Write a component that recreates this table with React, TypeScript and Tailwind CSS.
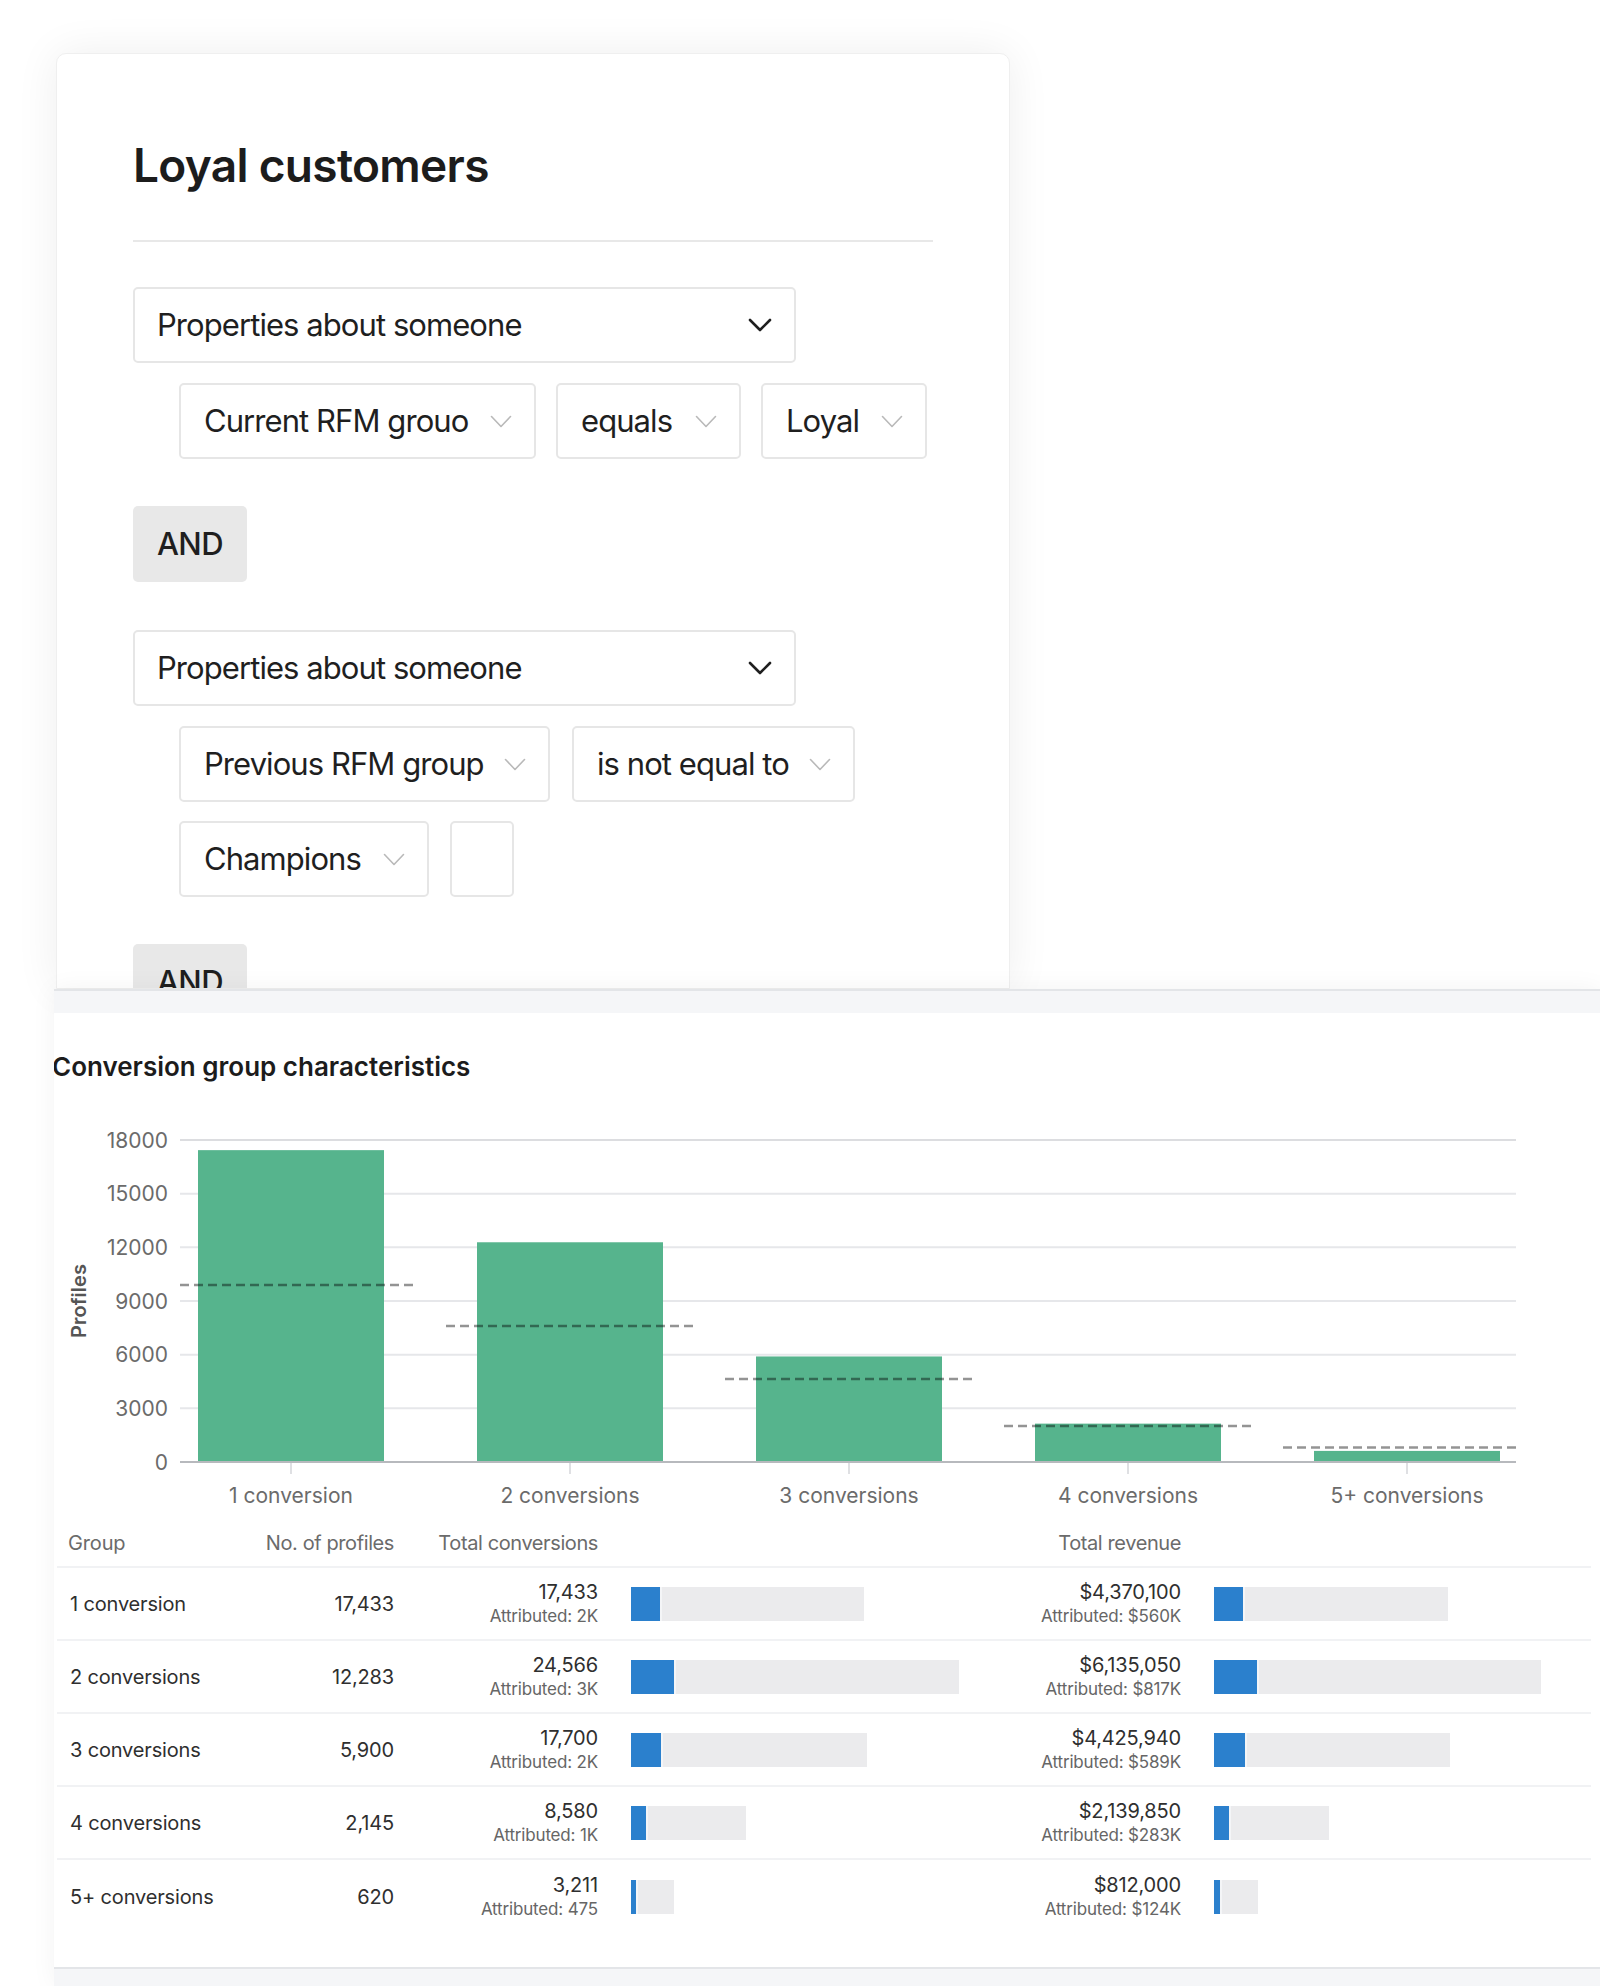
import React from "react";

const DarkChevron = () => (
  <svg width="24" height="14" viewBox="0 0 24 14" className="shrink-0">
    <path d="M2 2l10 10L22 2" fill="none" stroke="#1f1f1f" strokeWidth="2.6" strokeLinecap="round" strokeLinejoin="round" />
  </svg>
);

const LightChevron = () => (
  <svg width="22" height="13" viewBox="0 0 22 13" className="shrink-0">
    <path d="M1.5 1.5l9.5 10 9.5-10" fill="none" stroke="#b9b9b9" strokeWidth="1.6" strokeLinecap="round" strokeLinejoin="round" />
  </svg>
);

const MainSelect = ({ label }: { label: string }) => (
  <div className="w-[663px] h-[76px] flex items-center justify-between pl-[22px] pr-[22px] border-2 border-[#e6e6e6] rounded-[5px] bg-white">
    <span className="text-[31px] text-[#1f1f1f] tracking-[-0.03em] whitespace-nowrap">{label}</span>
    <DarkChevron />
  </div>
);

const SubSelect = ({ label, w }: { label?: string; w: string }) => (
  <div className={`${w} h-[76px] flex items-center justify-between pl-[23px] pr-[22px] border-2 border-[#e6e6e6] rounded-[5px] bg-white`}>
    {label ? <span className="text-[31px] text-[#1f1f1f] tracking-[-0.03em] whitespace-nowrap">{label}</span> : null}
    {label ? <LightChevron /> : null}
  </div>
);

const AndButton = () => (
  <div className="w-[114px] h-[76px] bg-[#e8e8e8] rounded-[5px] flex items-center pl-[24px]">
    <span className="text-[31px] font-medium text-[#1f1f1f] tracking-[-0.02em]">AND</span>
  </div>
);

const yOf = (v: number) => 1462 - (v / 18000) * 322;

const bars = [
  { label: "1 conversion", v: 17433, avgY: 1285 },
  { label: "2 conversions", v: 12283, avgY: 1326 },
  { label: "3 conversions", v: 5900, avgY: 1379 },
  { label: "4 conversions", v: 2145, avgY: 1426 },
  { label: "5+ conversions", v: 620, avgY: 1447.5 },
];

const Chart = () => {
  const ticks = [0, 3000, 6000, 9000, 12000, 15000, 18000];
  return (
    <svg width="1546" height="420" viewBox="54 1100 1546 420" className="block">
      {ticks.map((t) => (
        <g key={t}>
          {t !== 0 && (
            <line x1="180" x2="1516" y1={yOf(t)} y2={yOf(t)} stroke={t === 18000 ? "#dcdde0" : "#e6e7ea"} strokeWidth="2" />
          )}
          <text
            x="168"
            y={yOf(t) + 7.5}
            textAnchor="end"
            fontSize="21"
            fill="#6b6b6b"
            fontFamily="Inter, sans-serif"
          >
            {t}
          </text>
        </g>
      ))}
      {bars.map((b, i) => {
        const cx = 291 + i * 279;
        const top = yOf(b.v);
        return (
          <rect key={b.label} x={cx - 93} y={top} width="186" height={1462 - top} fill="#56b48d" />
        );
      })}
      <line x1="180" x2="1516" y1="1462" y2="1462" stroke="#b7b9bd" strokeWidth="2" />
      {bars.map((b, i) => {
        const cx = 291 + i * 279;
        const x1 = Math.max(180, cx - 124);
        const x2 = Math.min(1516, cx + 124);
        return (
          <g key={b.label + "x"}>
            <line x1={cx} x2={cx} y1="1463" y2="1474" stroke="#d4d6da" strokeWidth="1.5" />
            <line x1={x1} x2={x2} y1={b.avgY} y2={b.avgY} stroke="rgba(0,0,0,0.42)" strokeWidth="2.6" strokeDasharray="9 5" />
            <text
              x={cx}
              y="1503"
              textAnchor="middle"
              fontSize="21"
              fill="#6b6b6b"
              fontFamily="Inter, sans-serif"
            >
              {b.label}
            </text>
          </g>
        );
      })}
      <text
        x="0"
        y="0"
        transform="translate(86 1301) rotate(-90)"
        textAnchor="middle"
        fontSize="20"
        fontWeight="600"
        fill="#555"
        fontFamily="Inter, sans-serif"
      >
        Profiles
      </text>
    </svg>
  );
};

const rows = [
  { g: "1 conversion", p: "17,433", c: "17,433", ca: "Attributed: 2K", cb: 29, ct: 233, r: "$4,370,100", ra: "Attributed: $560K", rb: 29, rt: 234 },
  { g: "2 conversions", p: "12,283", c: "24,566", ca: "Attributed: 3K", cb: 43, ct: 328, r: "$6,135,050", ra: "Attributed: $817K", rb: 43, rt: 327 },
  { g: "3 conversions", p: "5,900", c: "17,700", ca: "Attributed: 2K", cb: 30, ct: 236, r: "$4,425,940", ra: "Attributed: $589K", rb: 31, rt: 236 },
  { g: "4 conversions", p: "2,145", c: "8,580", ca: "Attributed: 1K", cb: 15, ct: 115, r: "$2,139,850", ra: "Attributed: $283K", rb: 15, rt: 115 },
  { g: "5+ conversions", p: "620", c: "3,211", ca: "Attributed: 475", cb: 5, ct: 43, r: "$812,000", ra: "Attributed: $124K", rb: 6, rt: 44 },
];

const Bar = ({ blue, total }: { blue: number; total: number }) => (
  <div className="flex h-[34px]" style={{ width: total }}>
    <div className="h-full bg-[#2b80cd]" style={{ width: blue }} />
    <div className="h-full flex-1 bg-[#ebebed] border-l-2 border-[#f4f5f7]" />
  </div>
);

const gridCols = "grid grid-cols-[213px_124px_204px_362px_221px_410px]";

const Table = () => (
  <div className="ml-[3px] w-[1534px] tracking-[-0.01em]">
    <div className={`${gridCols} h-[48px] items-center border-b-2 border-[#f1f2f4] text-[20px] text-[#6b6b6b] whitespace-nowrap`}>
      <div className="pl-[11px]">Group</div>
      <div className="flex justify-end tracking-[-0.02em]">No. of profiles</div>
      <div className="flex justify-end tracking-[-0.02em]">Total conversions</div>
      <div />
      <div className="flex justify-end tracking-[-0.02em]">Total revenue</div>
      <div />
    </div>
    {rows.map((r, i) => (
      <div
        key={r.g}
        className={`${gridCols} h-[73px] items-center whitespace-nowrap ${i < rows.length - 1 ? "border-b-2 border-[#f1f2f4]" : ""}`}
      >
        <div className="pl-[13px] text-[20px] text-[#2f2f2f]">{r.g}</div>
        <div className="flex justify-end text-[20px] text-[#2f2f2f]">{r.p}</div>
        <div className="flex flex-col items-end">
          <span className="text-[20px] leading-[24px] text-[#2f2f2f]">{r.c}</span>
          <span className="text-[17px] leading-[24px] text-[#666]">{r.ca}</span>
        </div>
        <div className="pl-[33px]">
          <Bar blue={r.cb} total={r.ct} />
        </div>
        <div className="flex flex-col items-end">
          <span className="text-[20px] leading-[24px] text-[#2f2f2f]">{r.r}</span>
          <span className="text-[17px] leading-[24px] text-[#666]">{r.ra}</span>
        </div>
        <div className="pl-[33px]">
          <Bar blue={r.rb} total={r.rt} />
        </div>
      </div>
    ))}
  </div>
);

export default function App() {
  return (
    <div className="relative w-[1600px] h-[1986px] bg-white overflow-hidden font-['Inter',sans-serif]">
      <div className="pl-[56px] pt-[53px]">
        <div className="w-[954px] h-[936px] bg-white rounded-t-[10px] border border-[#efefef] shadow-[0_0_44px_rgba(0,0,0,0.07)] overflow-hidden px-[76px] pt-[83px]">
          <h1 className="text-[46px] leading-[56px] font-semibold text-[#1c1c1c] tracking-[-0.015em]">Loyal customers</h1>
          <div className="mt-[47px] h-[2px] bg-[#e8e8e8]" />
          <div className="mt-[45px]">
            <MainSelect label="Properties about someone" />
          </div>
          <div className="mt-[20px] ml-[46px] flex gap-[20px]">
            <SubSelect label="Current RFM grouo" w="w-[357px]" />
            <SubSelect label="equals" w="w-[185px]" />
            <SubSelect label="Loyal" w="w-[166px]" />
          </div>
          <div className="mt-[47px]">
            <AndButton />
          </div>
          <div className="mt-[48px]">
            <MainSelect label="Properties about someone" />
          </div>
          <div className="mt-[20px] ml-[46px] flex gap-[22px]">
            <SubSelect label="Previous RFM group" w="w-[371px]" />
            <SubSelect label="is not equal to" w="w-[283px]" />
          </div>
          <div className="mt-[19px] ml-[46px] flex gap-[21px]">
            <SubSelect label="Champions" w="w-[250px]" />
            <SubSelect w="w-[64px]" />
          </div>
          <div className="mt-[47px]">
            <AndButton />
          </div>
        </div>
      </div>
      <div className="ml-[54px] relative shadow-[0_0_24px_rgba(0,0,0,0.05)]">
        <div className="h-[24px] bg-[#f5f6f8] border-t-2 border-[#e3e5e8]" />
        <div className="h-[954px] bg-white overflow-hidden">
          <div className="pt-[38px] -ml-[2px] h-[70px]">
            <h2 className="text-[26px] leading-[32px] font-semibold text-[#1c1c1c] whitespace-nowrap">Conversion group characteristics</h2>
          </div>
          <div className="mt-[17px]">
            <Chart />
          </div>
          <Table />
        </div>
        <div className="h-[19px] bg-[#f5f6f8] border-t-2 border-[#e3e5e8]" />
      </div>
    </div>
  );
}
